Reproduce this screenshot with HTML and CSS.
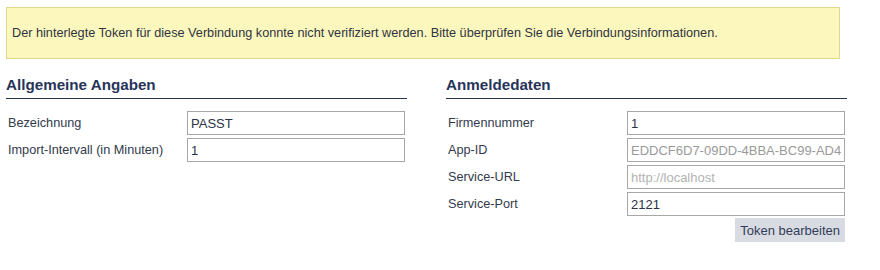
FILE: index.html
```html
<!DOCTYPE html>
<html lang="de">
<head>
<meta charset="utf-8">
<title>Verbindung</title>
<link rel="stylesheet" href="styles.css">
</head>
<body>
<div class="alert">Der hinterlegte Token für diese Verbindung konnte nicht verifiziert werden. Bitte überprüfen Sie die Verbindungsinformationen.</div>
<div class="columns">
  <section class="col">
    <h2 class="heading">Allgemeine Angaben</h2>
    <div class="form">
      <label class="label">Bezeichnung</label>
      <input class="field" type="text" value="PASST">
      <label class="label">Import-Intervall (in Minuten)</label>
      <input class="field" type="text" value="1">
    </div>
  </section>
  <section class="col">
    <h2 class="heading">Anmeldedaten</h2>
    <div class="form">
      <label class="label">Firmennummer</label>
      <input class="field" type="text" value="1">
      <label class="label">App-ID</label>
      <input class="field field-muted" type="text" value="EDDCF6D7-09DD-4BBA-BC99-AD4E5B2F61C3" readonly>
      <label class="label">Service-URL</label>
      <input class="field field-placeholder" type="text" placeholder="http://localhost">
      <label class="label">Service-Port</label>
      <input class="field" type="text" value="2121">
    </div>
    <div class="actions">
      <button class="btn" type="button">Token bearbeiten</button>
    </div>
  </section>
</div>
</body>
</html>
```
FILE: styles.css
```css
html, body {
  margin: 0;
  padding: 0;
  background: #ffffff;
}
body {
  font-family: "Liberation Sans", Arial, sans-serif;
  color: #333a4d;
}
.alert {
  width: 822px;
  margin: 7px 0 0 6px;
  padding: 17px 5px;
  line-height: 16px;
  font-size: 12.7px;
  color: #2f3442;
  background: #fcf8bd;
  border: 1px solid #ddd88e;
}
.columns {
  display: flex;
  gap: 39px;
  padding-left: 6px;
}
.col {
  width: 401px;
}
.heading {
  margin: 17px 0 0 0;
  padding: 0 0 4px 0;
  font-size: 15.2px;
  line-height: 18px;
  font-weight: bold;
  color: #27345a;
  border-bottom: 1px solid #27324d;
}
.form {
  display: grid;
  grid-template-columns: 179px 218px;
  row-gap: 3px;
  margin-top: 12px;
  padding: 0 2px;
}
.label {
  font-size: 12.7px;
  line-height: 24px;
  color: #333a4d;
}
.field {
  box-sizing: border-box;
  width: 218px;
  height: 24px;
  margin: 0;
  padding: 0 3px;
  font-family: "Liberation Sans", Arial, sans-serif;
  font-size: 13px;
  color: #2b3247;
  background: #ffffff;
  border: 1px solid #a7a7a7;
  border-radius: 0;
  outline: none;
}
.field-muted {
  color: #9a9a9a;
}
.field-placeholder::placeholder {
  color: #b3b3b3;
  opacity: 1;
}
.actions {
  display: flex;
  justify-content: flex-end;
  padding: 2px 2px 0 0;
}
.btn {
  height: 24px;
  margin: 0;
  padding: 0 5px;
  font-family: "Liberation Sans", Arial, sans-serif;
  font-size: 13px;
  color: #333d58;
  background: #d9dbe3;
  border: none;
  border-radius: 0;
}
```
